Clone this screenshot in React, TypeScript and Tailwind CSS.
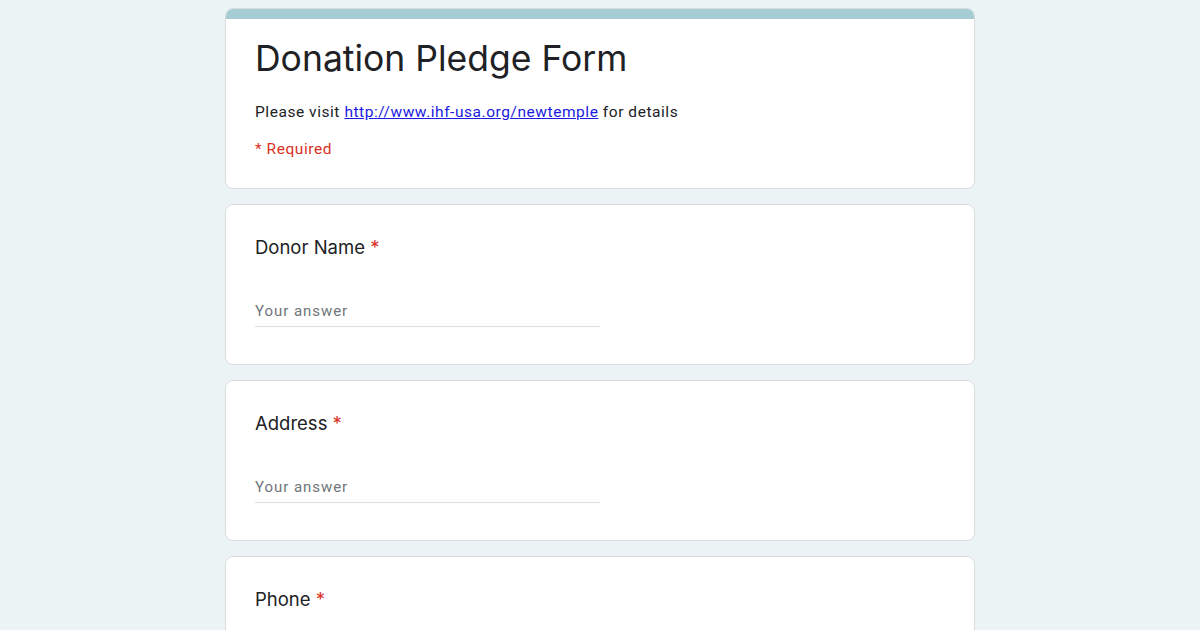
const questions = ['Donor Name', 'Address', 'Phone']

function Question({ label }: { label: string }) {
  return (
    <div className="bg-white border border-[#dadce0] rounded-lg h-[161px] mt-[15px] px-[29px] pt-[30px] shrink-0">
      <div className="text-[18.5px] leading-[24px] text-[#202124] font-['Inter',sans-serif]">
        {label} <span className="text-[#d93025]">*</span>
      </div>
      <div className="mt-[42px] w-[345px] border-b border-[#e0e0e0] pb-[5px] text-[15px] leading-[20px] text-[#70757a] tracking-[0.95px] font-['Roboto',sans-serif]">
        Your answer
      </div>
    </div>
  )
}

export default function App() {
  return (
    <div className="w-[1200px] h-[630px] overflow-hidden bg-[#ecf3f5] flex justify-center">
      <div className="w-[750px] pt-[8px] flex flex-col">
        <div className="bg-white border border-[#dadce0] rounded-lg overflow-hidden h-[181px] shrink-0">
          <div className="h-[10px] bg-[#a5cdd3]" />
          <div className="px-[29px] pt-[18px]">
            <h1 className="text-[35.5px] leading-[44px] text-[#202124] font-['Inter',sans-serif]">
              Donation Pledge Form
            </h1>
            <p className="mt-[21px] text-[15.5px] leading-[20px] tracking-[0.55px] text-[#202124] font-['Roboto',sans-serif]">
              Please visit{' '}
              <a href="#" className="text-[#1a1ae0] underline">
                http://www.ihf-usa.org/newtemple
              </a>{' '}
              for details
            </p>
            <p className="mt-[17px] text-[15.5px] leading-[20px] tracking-[0.55px] text-[#d93025] font-['Roboto',sans-serif]">
              * Required
            </p>
          </div>
        </div>
        {questions.map(q => (
          <Question key={q} label={q} />
        ))}
      </div>
    </div>
  )
}
